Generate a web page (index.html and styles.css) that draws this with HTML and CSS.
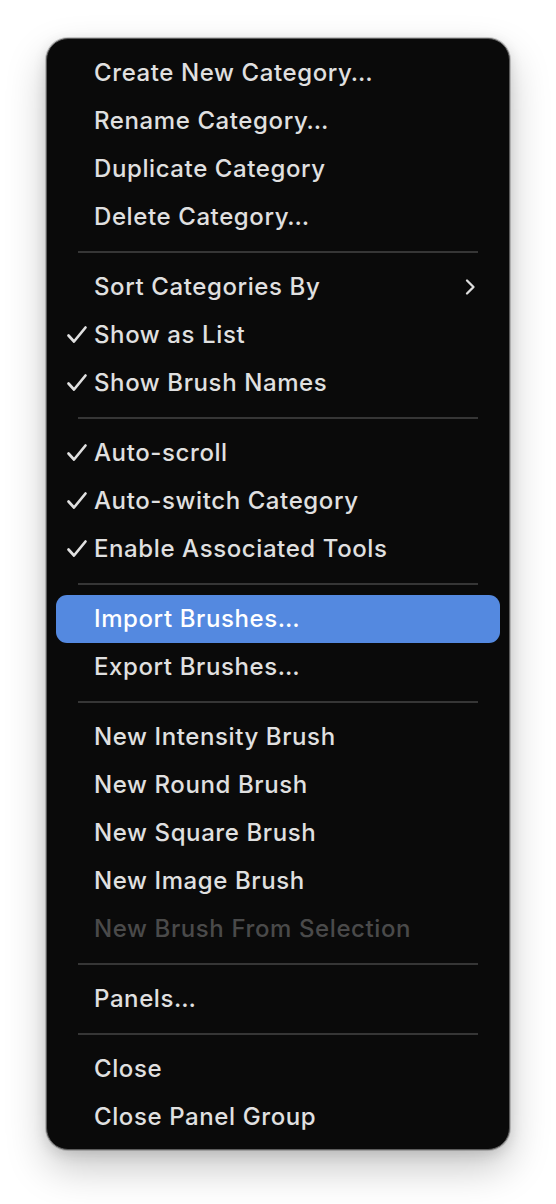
FILE: index.html
```html
<!DOCTYPE html>
<html>
<head>
<meta charset="utf-8">
<link rel="stylesheet" href="styles.css">
</head>
<body>
<div class="menu">
  <div class="item"><span class="check"></span><span class="label">Create New Category…</span></div>
  <div class="item"><span class="check"></span><span class="label">Rename Category…</span></div>
  <div class="item"><span class="check"></span><span class="label">Duplicate Category</span></div>
  <div class="item"><span class="check"></span><span class="label">Delete Category…</span></div>
  <div class="sep"></div>
  <div class="item"><span class="check"></span><span class="label">Sort Categories By</span>
    <svg class="chev" width="12" height="18" viewBox="0 0 12 18"><path d="M3 2.5 L9.5 9 L3 15.5" fill="none" stroke="currentColor" stroke-width="2.3" stroke-linecap="round" stroke-linejoin="round"/></svg>
  </div>
  <div class="item"><span class="check"><svg width="22" height="20" viewBox="0 0 22 20"><path d="M2.5 10.5 L8 16.5 L19.5 2.5" fill="none" stroke="currentColor" stroke-width="2.7" stroke-linecap="round" stroke-linejoin="round"/></svg></span><span class="label">Show as List</span></div>
  <div class="item"><span class="check"><svg width="22" height="20" viewBox="0 0 22 20"><path d="M2.5 10.5 L8 16.5 L19.5 2.5" fill="none" stroke="currentColor" stroke-width="2.7" stroke-linecap="round" stroke-linejoin="round"/></svg></span><span class="label">Show Brush Names</span></div>
  <div class="sep"></div>
  <div class="item"><span class="check"><svg width="22" height="20" viewBox="0 0 22 20"><path d="M2.5 10.5 L8 16.5 L19.5 2.5" fill="none" stroke="currentColor" stroke-width="2.7" stroke-linecap="round" stroke-linejoin="round"/></svg></span><span class="label">Auto-scroll</span></div>
  <div class="item"><span class="check"><svg width="22" height="20" viewBox="0 0 22 20"><path d="M2.5 10.5 L8 16.5 L19.5 2.5" fill="none" stroke="currentColor" stroke-width="2.7" stroke-linecap="round" stroke-linejoin="round"/></svg></span><span class="label">Auto-switch Category</span></div>
  <div class="item"><span class="check"><svg width="22" height="20" viewBox="0 0 22 20"><path d="M2.5 10.5 L8 16.5 L19.5 2.5" fill="none" stroke="currentColor" stroke-width="2.7" stroke-linecap="round" stroke-linejoin="round"/></svg></span><span class="label">Enable Associated Tools</span></div>
  <div class="sep"></div>
  <div class="item active"><span class="check"></span><span class="label">Import Brushes…</span></div>
  <div class="item"><span class="check"></span><span class="label">Export Brushes…</span></div>
  <div class="sep"></div>
  <div class="item"><span class="check"></span><span class="label">New Intensity Brush</span></div>
  <div class="item"><span class="check"></span><span class="label">New Round Brush</span></div>
  <div class="item"><span class="check"></span><span class="label">New Square Brush</span></div>
  <div class="item"><span class="check"></span><span class="label">New Image Brush</span></div>
  <div class="item disabled"><span class="check"></span><span class="label">New Brush From Selection</span></div>
  <div class="sep"></div>
  <div class="item"><span class="check"></span><span class="label">Panels…</span></div>
  <div class="sep"></div>
  <div class="item"><span class="check"></span><span class="label">Close</span></div>
  <div class="item"><span class="check"></span><span class="label">Close Panel Group</span></div>
</div>
</body>
</html>
```

FILE: styles.css
```css
html, body {
  margin: 0;
  padding: 0;
  background: #ffffff;
}
body {
  width: 556px;
  height: 1204px;
  font-family: Inter, "Noto Sans", "Liberation Sans", sans-serif;
}
.menu {
  box-sizing: border-box;
  margin: 38px 0 0 46px;
  width: 464px;
  height: 1112px;
  background: #0a0a0a;
  border: 1.5px solid #5c5c5c;
  border-radius: 22px;
  padding: 9.5px 9px 0 9px;
  box-shadow: 0 0 0 1px rgba(0,0,0,0.18), 0 18px 40px rgba(0,0,0,0.22), 0 4px 14px rgba(0,0,0,0.12);
}
.item {
  height: 48px;
  display: flex;
  align-items: center;
  border-radius: 11px;
  color: #e0e0e0;
  font-size: 24px;
  font-weight: 450;
  letter-spacing: 0.6px;
  padding-right: 24px;
}
.item.active {
  background: #5489e0;
  color: #ffffff;
}
.item.disabled {
  color: #4a4a4a;
}
.check {
  width: 38px;
  flex: none;
  display: flex;
  justify-content: flex-end;
  box-sizing: border-box;
}
.check svg {
  margin-right: 6px;
  display: block;
}
.label {
  flex: 1;
  white-space: nowrap;
}
.chev {
  color: #dedede;
  display: block;
}
.sep {
  height: 22px;
  display: flex;
  align-items: center;
  padding: 0 22px;
}
.sep::before {
  content: "";
  display: block;
  flex: 1;
  height: 2px;
  background: #363636;
}
```
